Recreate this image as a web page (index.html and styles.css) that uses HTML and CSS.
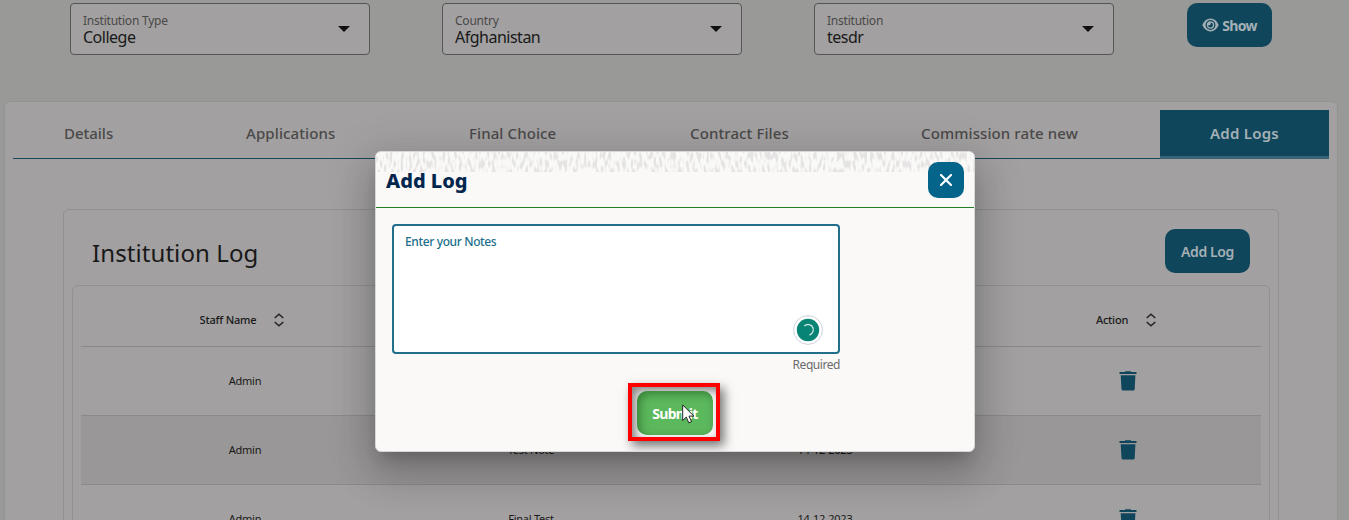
FILE: index.html
```html
<!DOCTYPE html>
<html lang="en">
<head>
<meta charset="utf-8">
<title>Institution Log</title>
<link rel="stylesheet" href="styles.css">
</head>
<body>
<svg class="defs" width="0" height="0">
  <symbol id="sort" viewBox="0 0 12 14"><path d="M1.700 5 6 1.300 10.300 5M1.700 9 6 12.700 10.300 9" fill="none" stroke="#222" stroke-width="1.500"/></symbol>
  <symbol id="trash" viewBox="0 0 18 20"><path d="M.5 1H6V.2h6V1h5.500v1.900H.5zM1.700 4.200h14.700L15.700 18q-.1 1.500-1.500 1.500H4q-1.400 0-1.500-1.500z" fill="#0f465b"/></symbol>
</svg>
<main class="page">
  <section class="filters">
    <div class="field"><div><label>Institution Type</label><p>College</p></div><i class="caret"></i></div>
    <div class="field"><div><label>Country</label><p>Afghanistan</p></div><i class="caret"></i></div>
    <div class="field"><div><label>Institution</label><p>tesdr</p></div><i class="caret"></i></div>
    <button class="btn show"><svg width="17" height="14" viewBox="0 0 17 14"><path d="M.3 7Q3.300.6 8.500.6T16.700 7q-3 6.400-8.200 6.400T.3 7z" fill="#a5b0b6"/><circle cx="8.500" cy="7" r="4.300" fill="none" stroke="#0f465b" stroke-width="1.300"/><path d="M8.800 4.500A2.500 2.500 0 1 1 6 7.300Q9 7.700 8.800 4.500z" fill="#0f465b"/></svg>Show</button>
  </section>
  <section class="card">
    <nav class="tabs">
      <a>Details</a><a class="wide">Applications</a><a class="wide">Final Choice</a><a class="wide">Contract Files</a><a class="wide">Commission rate new</a><a class="active">Add Logs</a>
    </nav>
    <div class="panel">
      <header class="panel-head"><h2>Institution Log</h2><button class="btn">Add Log</button></header>
      <div class="table">
        <div class="row head"><span>Staff Name<svg width="12" height="14"><use href="#sort"/></svg></span><span></span><span></span><span>Action<svg width="12" height="14"><use href="#sort"/></svg></span></div>
        <div class="row"><span>Admin</span><span></span><span></span><span><svg width="18" height="20"><use href="#trash"/></svg></span></div>
        <div class="row alt"><span>Admin</span><span>Test Note</span><span>14-12-2023</span><span><svg width="18" height="20"><use href="#trash"/></svg></span></div>
        <div class="row"><span>Admin</span><span>Final Test</span><span>14-12-2023</span><span><svg width="18" height="20"><use href="#trash"/></svg></span></div>
      </div>
    </div>
  </section>
</main>
<div class="modal">
  <svg class="texture" width="598" height="20">
    <filter id="grain" x="0" y="0" width="100%" height="100%" color-interpolation-filters="sRGB">
      <feTurbulence type="fractalNoise" baseFrequency=".36 .12" numOctaves="1" seed="7"/>
      <feColorMatrix values="1.200 0 0 0 .33  1.200 0 0 0 .327  1.200 0 0 0 .325  0 0 0 0 1"/>
      <feComponentTransfer><feFuncR type="table" tableValues=".9 .9 .9 .9 .9 .9 .9 .9 .905 .96 .98"/><feFuncG type="table" tableValues=".896 .896 .896 .896 .896 .896 .896 .896 .9 .957 .977"/><feFuncB type="table" tableValues=".894 .894 .894 .894 .894 .894 .894 .894 .9 .954 .973"/></feComponentTransfer>
    </filter>
    <rect width="598" height="20" filter="url(#grain)"/>
  </svg>
  <header class="modal-head"><h3>Add Log</h3><button class="close"><svg width="12" height="12" viewBox="0 0 12 12"><path d="m1 1 10 10M11 1 1 11" stroke="#fff" stroke-width="2.200" stroke-linecap="round"/></svg></button></header>
  <div class="modal-body">
    <div class="notes"><label>Enter your Notes</label>
      <svg class="checker" width="30" height="30" viewBox="0 0 30 30"><circle cx="15" cy="15" r="14.400" fill="#fff" stroke="#cfd1dc"/><circle cx="15" cy="15" r="11.200" fill="#078474"/><path d="M11.200 10.900Q15 8 18.800 10.900A5.600 5.600 0 0 1 16.500 20" fill="none" stroke="#c9e5e1" stroke-width="1.400"/></svg>
    </div>
    <p class="hint">Required</p>
    <div class="actions"><button class="submit">Submit</button></div>
  </div>
</div>
<svg class="cursor" width="14" height="20" viewBox="0 0 14 20"><path d="M.7.9v15.600l3.600-3.400 2.500 5.700 2.700-1.200L7 12.100h4.900z" fill="#fff" stroke="#222" stroke-width="1"/></svg>
</body>
</html>
```
FILE: styles.css
```css
* { box-sizing: border-box; }
body, h2, h3, p { margin: 0; }
body { width: 1349px; height: 520px; overflow: hidden; background: #999998; color: #191919; font-family: "Noto Sans", "Open Sans", sans-serif; }
button { border: 0; padding: 0; font-family: inherit; }
.defs { position: absolute; }
.page { height: 520px; overflow: hidden; padding: 3px 11px 0 4px; }
.filters { display: flex; height: 98px; padding-left: 66px; gap: 72px; align-items: flex-start; }
.field { width: 300px; height: 52px; border: 1px solid #555; border-radius: 4px; background: #a2a0a0; display: flex; justify-content: space-between; padding: 8px 19px 0 12px; }
.field label { display: block; font-size: 12px; line-height: 18px; color: #494949; letter-spacing: -.22px; }
.field p { font-size: 16px; line-height: 20px; margin-top: -3px; letter-spacing: -.5px; }
.caret { border: 6px solid transparent; border-top-color: #111; border-bottom: 0; margin-top: 14px; height: 6px; }
.btn { width: 85px; height: 44px; border-radius: 10px; background: #0f465b; color: #a5b0b6; font-size: 14px; font-weight: 600; letter-spacing: -.4px; display: flex; align-items: center; justify-content: center; gap: 3px; }
.show { margin-left: 1px; font-weight: 700; letter-spacing: -.7px; }
.card { height: 450px; border: 1px solid #949393; border-radius: 6px; background: #a2a0a0; padding: 8px 8px 8px 9px; }
.tabs { display: grid; grid-template-columns: 182px 223px 221px 231px 290px 169px; height: 49px; border-bottom: 1px solid #17475a; width: 1316px; margin-left: -1px; }
.tabs a { padding-left: 51px; font-size: 15px; font-weight: 500; line-height: 46px; color: #4a4949; white-space: nowrap; letter-spacing: -.02px; }
.tabs .wide { letter-spacing: .1px; }
.tabs .active { padding-left: 50px; background: #0f465b; border-bottom: 3px solid #3a6475; color: #a5b0b6; font-weight: 600; letter-spacing: .25px; }
.panel { margin: 50px 50px 0 49px; width: 1216px; height: 350px; border: 1px solid #919090; border-radius: 6px; padding: 19px 8px 0; }
.panel-head { display: flex; justify-content: space-between; align-items: center; padding: 0 20px; height: 44px; }
h2 { font-size: 24px; font-weight: 400; letter-spacing: .08px; padding-top: 2px; }
.table { margin-top: 12px; height: 300px; border: 1px solid #919090; border-radius: 6px; padding: 0 8px; }
.row { display: grid; grid-template-columns: 328px 244px 344px 264px; height: 69px; border-bottom: 1px solid #8b8a8a; font-size: 11px; letter-spacing: -.25px; }
.row span { display: flex; justify-content: center; align-items: center; padding-bottom: 2px; }
.row span:last-child { padding: 0 2px 0 0; }
.head { height: 61px; padding-top: 6px; font-weight: 500; letter-spacing: -.2px; }
.head span, .head span:last-child { padding: 0; margin-left: -5px; }
.head svg { margin: 1px 0 0 17px; }
.alt { background: #999797; }
.modal { position: absolute; left: 375px; top: 151px; width: 600px; height: 301px; border: 1px solid #d9d8d7; border-radius: 6px; background: #faf9f8; overflow: hidden; box-shadow: 0 11px 15px -7px #0003, 0 24px 38px 3px #00000024, 0 9px 46px 8px #0000001f; }
.texture { position: absolute; left: 0; top: 0; }
.modal-head { position: relative; display: flex; height: 56px; border-bottom: 1px solid #238022; justify-content: space-between; padding: 10px 10px 0; }
h3 { font-size: 20px; line-height: 38px; font-weight: 800; color: #03264f; letter-spacing: 0; }
.close { width: 36px; height: 36px; border-radius: 10px; background: #056489; display: flex; align-items: center; justify-content: center; }
.modal-body { padding: 16px; }
.notes { position: relative; width: 448px; height: 130px; border: 2px solid #216f8a; border-radius: 4px; background: #fff; padding: 7px 11px; }
.notes label { display: block; font-size: 12px; line-height: 17px; font-weight: 500; color: #216f8a; letter-spacing: -.37px; }
.checker { position: absolute; right: 15px; bottom: 7px; }
.hint { width: 448px; text-align: right; font-size: 12px; line-height: 22px; height: 20px; color: #6c6c6c; letter-spacing: -.45px; }
.actions { width: 92px; height: 58px; margin: 9px 0 0 236px; border: 4px solid #f00; padding: 4px 5px; box-shadow: 4px 5px 10px #0008, inset 4px 4px 8px #0007; }
.submit { display: block; width: 76px; height: 44px; border-radius: 10px; background: #5cb85c; color: #fff; font-size: 14px; font-weight: 700; letter-spacing: -.7px; box-shadow: inset 3px 3px 8px #174c1780; }
.cursor { position: absolute; left: 682px; top: 404px; }
```
